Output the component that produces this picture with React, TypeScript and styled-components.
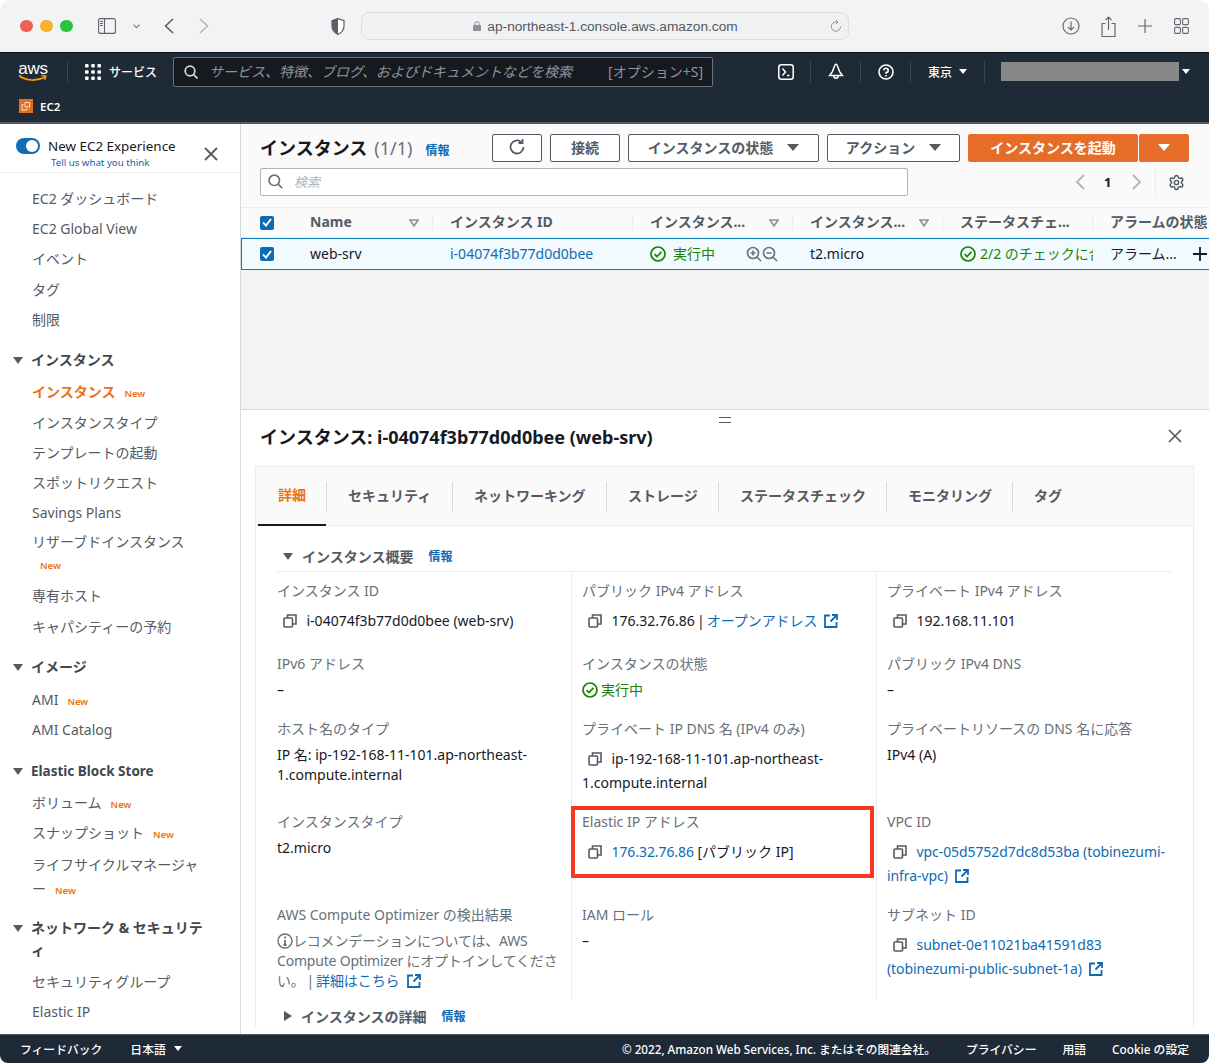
import React from 'react';
import styled, { createGlobalStyle } from 'styled-components';
import { Settings } from 'lucide-react';

const Global = createGlobalStyle`
  html, body { margin: 0; padding: 0; background: #fff; }
  body { font-family: "Noto Sans", "Noto Sans CJK JP", sans-serif; color: #16191f; }
  * { box-sizing: border-box; }
`;

const Window = styled.div`
  width: 1209px; height: 1063px; display: flex; flex-direction: column; overflow: hidden;
  border-radius: 10px 10px 8px 8px; background: #fff;
`;
/* Browser chrome */
const Chrome = styled.div`
  height: 53px; flex: none; background: #f2f3f5; display: flex; align-items: center; position: relative;
  border-bottom: 1px solid #0d1117;
`;
const Lights = styled.div`display: flex; gap: 7.5px; margin-left: 20px; width: 78px;`;
const Light = styled.span<{ $c: string }>`width: 12.5px; height: 12.5px; border-radius: 50%; background: ${p => p.$c};`;
const ChromeIcon = styled.svg<{ $ml: number }>`flex: none; margin-left: ${p => p.$ml}px; display: block;`;
const UrlBar = styled.div`
  width: 488px; height: 28px; margin-left: 16px; flex: none; border: 1px solid #dcdde0; border-radius: 8px; background: #f0f1f3;
  display: flex; align-items: center; justify-content: center; gap: 6px; position: relative;
  font-family: "Liberation Sans", sans-serif; font-size: 13.7px; color: #55585d; padding-left: 1px;
`;
const Reload = styled.svg`position: absolute; right: 5px; top: 6px;`;

/* AWS header */
const Header = styled.div`
  height: 71px; flex: none; background: #1f2a37; border-bottom: 2px solid #545b64; display: flex; flex-direction: column; color: #fff;
`;
const HeaderTop = styled.div`height: 37px; display: flex; align-items: center; flex: none;`;
const HeaderBottom = styled.div`height: 32px; display: flex; align-items: center; padding: 0 0 0 19px; gap: 7px; font-size: 11.5px; font-weight: 600;`;
const AwsLogo = styled.div`
  width: 30px; margin-left: 18px; height: 26px; position: relative; flex: none; display: flex; justify-content: center;
  font-family: "Liberation Sans", sans-serif; font-size: 17px; line-height: 19px; letter-spacing: -.3px;
`;
const Smile = styled.svg`position: absolute; left: 0; top: 15px;`;
const VSep = styled.span<{ $ml: number; $h?: number }>`width: 1px; height: ${p => p.$h ?? 22}px; background: #3d4753; margin-left: ${p => p.$ml}px; flex: none;`;
const Services = styled.div`display: flex; align-items: center; gap: 8px; margin-left: 17px; font-size: 12px; font-weight: 500; width: 88px; flex: none;`;
const GlobalSearch = styled.div`
  width: 540px; height: 30px; background: #16191f; border: 1px solid #687078; border-radius: 2px; flex: none; display: flex; align-items: center; padding: 0 9px 0 10px; gap: 11px;
  font-size: 14px; color: #8d9499;
`;
const GlobalPlaceholder = styled.span`flex: 1; font-style: italic; white-space: nowrap; padding-bottom: 2px;`;
const Shortcut = styled.span`font-size: 14px; white-space: nowrap; padding-bottom: 2px;`;
const NavIcon = styled.div<{ $w: number; $pl?: number }>`width: ${p => p.$w}px; padding-left: ${p => p.$pl ?? 0}px; flex: none; display: flex; justify-content: center; align-items: center; height: 22px; border-right: 1px solid #3d4753;`;
const Region = styled.div`width: 74px; flex: none; height: 22px; border-right: 1px solid #3d4753; display: flex; align-items: center; padding-left: 17px; gap: 7px; font-size: 12px; font-weight: 500;`;
const Masked = styled.div`width: 178px; height: 19px; background: #888; margin-left: 16px; flex: none;`;
const Caret = styled.span<{ $c?: string; $s?: number }>`
  display: inline-block; flex: none; width: 0; height: 0;
  border-left: ${p => p.$s ?? 4}px solid transparent; border-right: ${p => p.$s ?? 4}px solid transparent;
  border-top: ${p => (p.$s ?? 4) * 1.25}px solid ${p => p.$c ?? '#fff'};
`;
const UserCaret = styled(Caret)`margin-left: 3px;`;

/* Body */
const Body = styled.div`flex: 1; display: flex; min-height: 0;`;
const Sidebar = styled.nav`width: 241px; flex: none; border-right: 1px solid #d5dbdb; background: #fff; overflow: hidden; display: flex; flex-direction: column;`;
const Experience = styled.div`height: 49px; flex: none; border-bottom: 1px solid #eaeded; display: flex; padding: 14px 0 0 16px; position: relative; margin-bottom: 11px;`;
const Toggle = styled.span`width: 24px; height: 16px; border-radius: 8px; background: #0f6cb5; position: relative; flex: none; &::after { content: ''; position: absolute; right: 2px; top: 2px; width: 12px; height: 12px; border-radius: 50%; background: #fff; }`;
const ExpText = styled.div`margin-left: 8px; font-size: 13.4px; line-height: 17px; white-space: nowrap; color: #16191f;`;
const ExpLink = styled.div`font-size: 9.7px; line-height: 14px; color: #0f5eb8; margin: 1px 0 0 3px;`;
const CloseBtn = styled.svg`position: absolute; left: 204px; top: 23px;`;
const NavList = styled.div`display: flex; flex-direction: column;`;
const NavItem = styled.div<{ $active?: boolean }>`
  padding: 0 8px 0 32px; height: 30.2px; font-size: 14px; line-height: 30px; white-space: nowrap;
  color: ${p => (p.$active ? '#ec7211' : '#545b64')}; font-weight: ${p => (p.$active ? 700 : 400)};
`;
const NavWrap = styled.div<{ $mt: number; $mb: number }>`padding: 0 36px 0 32px; font-size: 14px; line-height: 24px; color: #545b64; margin: ${p => p.$mt}px 0 ${p => p.$mb}px;`;
const NavSection = styled.div<{ $fs?: number; $mb?: number }>`
  display: flex; align-items: flex-start; gap: 8px; padding: 0 30px 0 13px; margin: 14.5px 0 ${p => p.$mb ?? 4}px; font-size: ${p => p.$fs ?? 14}px; line-height: 22px; font-weight: 700; color: #414750; min-height: 24px;
`;
const SecCaret = styled.span`margin-top: 8px; flex: none; display: inline-block; width: 0; height: 0; border-left: 5px solid transparent; border-right: 5px solid transparent; border-top: 7px solid #545b64;`;
const New = styled.span<{ $block?: boolean }>`color: #ec7211; font-size: 9.5px; line-height: 1; font-weight: 600; margin-left: 9px; ${p => (p.$block ? 'display: block; margin: 3px 0 0 8px; line-height: 18px;' : '')}`;

const Main = styled.main`flex: 1; min-width: 0; display: flex; flex-direction: column; background: #f2f3f3; overflow: hidden;`;
const ListHead = styled.div`height: 84px; flex: none; background: #fafafa; padding: 10px 0 0 19px; border-bottom: 1px solid #eaeded; display: flex; flex-direction: column;`;
const TitleRow = styled.div`display: flex; align-items: center; height: 28px;`;
const H1 = styled.div`font-size: 18px; font-weight: 700; color: #16191f; white-space: nowrap; width: 232px; display: flex; align-items: baseline; padding-bottom: 3px;`;
const Count = styled.span`font-weight: 400; color: #687078; margin-left: 7px;`;
const Info = styled.span<{ $ml?: number }>`color: #0f6ab4; font-size: 12px; font-weight: 700; margin-left: ${p => p.$ml ?? 13}px; white-space: nowrap;`;
const Btn = styled.div<{ $w: number; $primary?: boolean; $ml?: number }>`
  width: ${p => p.$w}px; height: 28px; flex: none; border-radius: 2px; display: flex; align-items: center; justify-content: center; gap: 14px;
  margin-left: ${p => p.$ml ?? 8}px; font-size: 14px; font-weight: 700; white-space: nowrap; padding-bottom: 2px;
  background: ${p => (p.$primary ? '#e66d28' : '#fff')}; color: ${p => (p.$primary ? '#fff' : '#545b64')};
  border: 1px solid ${p => (p.$primary ? '#e66d28' : '#545b64')};
`;
const SearchRow = styled.div`display: flex; align-items: center; height: 28px; margin-top: 6px;`;
const SearchBox = styled.div`width: 648px; height: 28px; background: #fff; border: 1px solid #aab7b8; border-radius: 2px; display: flex; align-items: center; padding: 0 0 2px 7px; gap: 11px; font-size: 13px; font-style: italic; color: #aab7b8; flex: none;`;
const Pager = styled.div`margin-left: 167px; display: flex; align-items: center; height: 28px; font-size: 13px; font-weight: 700;`;
const PagerNum = styled.span`margin: 0 21px 0 19px;`;
const GearWrap = styled.div`margin-left: 13px; padding-left: 12px; height: 28px; border-left: 1px solid #eaeded; display: flex; align-items: center;`;

const THead = styled.div`grid-template-columns: 52px 140px 200px 160px 150px 150px 1fr; display: grid; height: 30px; flex: none; background: #fafafa; border-bottom: 1px solid #eaeded; align-items: center;`;
const TH = styled.div<{ $sep?: boolean }>`
  height: 16px; padding: 0 13px 0 17px; display: flex; align-items: center; justify-content: space-between; font-size: 14px; font-weight: 700; color: #545b64; white-space: nowrap;
  border-right: 1px solid ${p => (p.$sep === false ? 'transparent' : '#eaeded')};
`;
const THText = styled.span`padding-bottom: 3px;`;
const TRow = styled.div`grid-template-columns: 51px 140px 200px 160px 150px 150px 1fr; display: grid; height: 32px; flex: none; background: #f1faff; border: 1px solid #0f80b8; border-right: none; align-items: center; box-shadow: 0 1px 1px rgba(0,28,36,.3); font-size: 14px;`;
const TD = styled.div<{ $c?: string }>`padding-left: 17px; color: ${p => p.$c ?? '#16191f'}; display: flex; align-items: center; white-space: nowrap; overflow: hidden; height: 100%;`;
const TDText = styled.span`padding-bottom: 2px;`;
const Check = styled.span`width: 14px; height: 14px; margin-left: 2px; background: #0f6ab4; border-radius: 2px; display: flex; align-items: center; justify-content: center; flex: none;`;
const CheckCell = styled.div<{ $pl?: number }>`padding-left: ${p => p.$pl ?? 17}px; display: flex; align-items: center;`;
const Status = styled.span<{ $gap?: number }>`display: inline-flex; align-items: center; gap: ${p => p.$gap ?? 7}px; color: #1d8102;`;
const Magnifiers = styled.span`display: inline-flex; margin-left: auto; margin-right: 15px; gap: 0;`;
const Plus = styled.svg`margin-left: auto; margin-right: 2px;`;
const Gap = styled.div`height: 139px; flex: none; background: #f2f3f3;`;

const Panel = styled.section`flex: 1; min-height: 0; background: #fff; border-top: 1px solid #d5dbdb; position: relative; padding: 0 15px 0 14px; overflow: hidden;`;
const Handle = styled.div`position: absolute; left: 478px; top: 7px; width: 12px; height: 6px; border-top: 1.5px solid #545b64; border-bottom: 1.5px solid #545b64;`;
const PanelTitle = styled.div`height: 52px; margin-bottom: 4px; display: flex; align-items: center; padding: 0 12px 0 5px; font-size: 18px; font-weight: 700; justify-content: space-between;`;
const Card = styled.div`border: 1px solid #eaeded; border-bottom: none; box-shadow: 0 0 1px rgba(0,0,0,.05);`;
const Tabs = styled.div`height: 59px; display: flex; align-items: center; background: #fafafa; border-bottom: 1px solid #eaeded; padding-left: 2px;`;
const Tab = styled.div<{ $active?: boolean; $w: number }>`
  width: ${p => p.$w}px; flex: none; height: 100%; display: flex; align-items: center; padding: 0 0 3px ${p => (p.$active ? 20 : 22)}px; font-size: 14px; font-weight: 700; white-space: nowrap; position: relative;
  color: ${p => (p.$active ? '#ec7211' : '#545b64')};
  ${p => (p.$active
    ? 'border-bottom: 2px solid #16191f; margin-bottom: -1px;'
    : `&::before { content: ''; position: absolute; left: 0; top: 15px; height: 29px; width: 1px; background: #d5dbdb; }`)}
`;
const Content = styled.div`padding: 20px 21px 0 21px;`;
const SecHead = styled.div`height: 26px; display: flex; align-items: center; gap: 9px; font-size: 14px; font-weight: 700; color: #545b64; border-bottom: 1px solid #eaeded; padding-bottom: 5px;`;
const TriDown = styled.span`width: 0; height: 0; border-left: 5px solid transparent; border-right: 5px solid transparent; border-top: 7px solid #545b64; flex: none; margin-left: 6px;`;
const TriRight = styled.span`width: 0; height: 0; border-top: 5px solid transparent; border-bottom: 5px solid transparent; border-left: 8px solid #545b64; flex: none; margin-left: 7px;`;
const Grid = styled.div`display: grid; grid-template-columns: 294px 305px 1fr; grid-template-rows: 73px 65px 93px 93px 104px;`;
const Cell = styled.div<{ $first?: boolean; $boxed?: boolean }>`
  padding: 9px 0 0 ${p => (p.$first ? 0 : 10)}px; border-left: ${p => (p.$first ? 'none' : '1px solid #eaeded')}; position: relative; min-width: 0;
  ${p => (p.$boxed ? `&::after { content: ''; box-sizing: border-box; position: absolute; left: -1px; top: 3px; width: 303px; height: 72px; border: 4px solid #f93822; pointer-events: none; }` : '')}
`;
const Label = styled.div`font-size: 14px; line-height: 20px; color: #687078; white-space: nowrap;`;
const Value = styled.div`font-size: 14px; line-height: 24px; color: #16191f; margin-top: 8px;`;
const Plain = styled.div`font-size: 14px; line-height: 20px; color: #16191f; margin-top: 6px;`;
const Body14 = styled.div`font-size: 14px; line-height: 20px; color: #687078; margin-top: 6px; letter-spacing: -.2px;`;
const Copy = styled.svg`display: inline-block; vertical-align: -2px; margin: 0 9.5px 0 6px;`;
const A = styled.a`color: #0f6ab4; text-decoration: none; letter-spacing: -.08px;`;
const Tight = styled.span`word-spacing: -1.5px;`;
const Ext = styled.svg`display: inline-block; vertical-align: -2px; margin-left: 7px;`;
const InfoIcon = styled.svg`display: inline-block; vertical-align: -3px;`;
const Running = styled.div`display: flex; align-items: center; gap: 3px; color: #1d8102; font-size: 14px; line-height: 20px; margin-top: 6px;`;
const Foot2 = styled.div`display: flex; align-items: center; height: 20px; gap: 9px; font-size: 14px; font-weight: 700; color: #545b64; margin-top: 6px;`;

const Footer = styled.footer`height: 29px; flex: none; background: #1f2a37; border-top: 1px solid #545b64; color: #fff; display: flex; align-items: center; font-size: 11.8px; font-weight: 500; padding: 0 20px 2px;`;
const FootLeft = styled.div`display: flex; align-items: center; gap: 28px; flex: 1;`;
const FootLang = styled.span`display: flex; align-items: center; gap: 8px;`;
const FootRight = styled.div`display: flex; gap: 26px; white-space: nowrap;`;
const Copyright = styled.span`font-size: 11.7px; margin-right: 4px;`;

const CopyIcon = () => (
  <Copy width="14" height="14" viewBox="0 0 14 14" fill="none" stroke="#545b64" strokeWidth="1.6">
    <rect x="1" y="4" width="8.5" height="9" rx="1" />
    <path d="M4.5 4V1h8.5v9h-3.5" />
  </Copy>
);
const ExtIcon = () => (
  <Ext width="14" height="14" viewBox="0 0 14 14" fill="none" stroke="#0f6ab4" strokeWidth="1.8">
    <path d="M6 1.5H1V13h11.5V8" />
    <path d="M8 1h5v5M13 1 6.5 7.5" />
  </Ext>
);
const OkIcon = () => (
  <svg width="16" height="16" viewBox="0 0 16 16" fill="none" stroke="#1d8102" strokeWidth="1.7">
    <circle cx="8" cy="8" r="7" />
    <path d="M4.6 8.2 7 10.5l4.4-4.6" />
  </svg>
);
const FilterTri = () => (
  <svg width="10" height="8" viewBox="0 0 10 8" fill="none" stroke="#879596" strokeWidth="1.6">
    <path d="M1 1h8L5 7z" />
  </svg>
);
const CheckBox = () => (
  <Check>
    <svg width="10" height="9" viewBox="0 0 10 9" fill="none" stroke="#fff" strokeWidth="2"><path d="M1 4.5 4 7.5 9 1" /></svg>
  </Check>
);
const Zoom = ({ plus }: { plus?: boolean }) => (
  <svg width="16" height="16" viewBox="0 0 16 16" fill="none" stroke="#687078" strokeWidth="1.6">
    <circle cx="7" cy="7" r="5.5" />
    <path d="M11 11l4 4M4.5 7h5" />
    {plus && <path d="M7 4.5v5" />}
  </svg>
);

const App = () => (
  <Window>
    <Global />
    <Chrome>
      <Lights>
        <Light $c="#ee5f57" /><Light $c="#f5b12f" /><Light $c="#2ac33f" />
      </Lights>
      <ChromeIcon $ml={0} width="18" height="16" viewBox="0 0 18 16" fill="none" stroke="#606468" strokeWidth="1.1">
        <rect x=".6" y=".6" width="16.8" height="14.8" rx="2" />
        <path d="M6.5.6v14.8M2 3.5h3M2 5.5h3M2 7.5h3" />
      </ChromeIcon>
      <ChromeIcon $ml={17} width="7" height="5" viewBox="0 0 7 5" fill="none" stroke="#7b7e82" strokeWidth="1.2"><path d="M.5.7 3.5 3.7 6.5.7" /></ChromeIcon>
      <ChromeIcon $ml={24} width="10" height="16" viewBox="0 0 10 16" fill="none" stroke="#54575b" strokeWidth="1.5"><path d="M9 1 1.5 8 9 15" /></ChromeIcon>
      <ChromeIcon $ml={25} width="10" height="16" viewBox="0 0 10 16" fill="none" stroke="#b3b5b8" strokeWidth="1.5"><path d="M1 1 8.5 8 1 15" /></ChromeIcon>
      <ChromeIcon $ml={122} width="14" height="17" viewBox="0 0 14 17">
        <path d="M7 .6 13 2.6V8c0 4-2.5 6.8-6 8.4C3.5 14.8 1 12 1 8V2.6z" fill="#fff" stroke="#5c6064" strokeWidth="1.2" />
        <path d="M7 .6 1 2.6V8c0 4 2.5 6.8 6 8.4z" fill="#5c6064" />
      </ChromeIcon>
      <UrlBar>
        <svg width="8" height="10" viewBox="0 0 8 10" fill="none"><rect y="4" width="8" height="6" rx="1" fill="#8c8f93" /><path d="M1.8 4.5V2.8a2.2 2.2 0 0 1 4.4 0v1.7" stroke="#8c8f93" strokeWidth="1" /></svg>
        ap-northeast-1.console.aws.amazon.com
        <Reload width="14" height="14" viewBox="0 0 14 14" fill="none" stroke="#8c8f93" strokeWidth="1"><path d="M11.5 7.5A4.6 4.6 0 1 1 7 3h1.5M7 1l2 2-2 2" /></Reload>
      </UrlBar>
      <ChromeIcon $ml={213} width="18" height="18" viewBox="0 0 18 18" fill="none" stroke="#66696d" strokeWidth="1.2">
        <circle cx="9" cy="9" r="8" /><path d="M9 4.5v8.5M5.8 9.8 9 13l3.2-3.2" />
      </ChromeIcon>
      <ChromeIcon $ml={21} width="15" height="21" viewBox="0 0 15 21" fill="none" stroke="#66696d" strokeWidth="1.2">
        <path d="M4.5 7.5H1v13h13v-13h-3.5M7.5 14V1M4.5 4l3-3 3 3" />
      </ChromeIcon>
      <ChromeIcon $ml={22} width="14" height="14" viewBox="0 0 14 14" fill="none" stroke="#66696d" strokeWidth="1.2"><path d="M7 0v14M0 7h14" /></ChromeIcon>
      <ChromeIcon $ml={22} width="15" height="16" viewBox="0 0 15 16" fill="none" stroke="#66696d" strokeWidth="1.1">
        <rect x=".6" y=".6" width="5.8" height="6" rx="1.2" /><rect x="8.6" y=".6" width="5.8" height="6" rx="1.2" />
        <rect x=".6" y="9.4" width="5.8" height="6" rx="1.2" /><rect x="8.6" y="9.4" width="5.8" height="6" rx="1.2" />
      </ChromeIcon>
    </Chrome>

    <Header>
      <HeaderTop>
        <AwsLogo>
          aws
          <Smile width="30" height="9" viewBox="0 0 30 9" fill="none">
            <path d="M1 1.5C8 7 19 7.5 27 3" stroke="#ff9900" strokeWidth="1.7" />
            <path d="M23.5 1.5 28 2l-1.3 4" stroke="#ff9900" strokeWidth="1.4" />
          </Smile>
        </AwsLogo>
        <VSep $ml={19} />
        <Services>
          <svg width="16" height="16" viewBox="0 0 16 16" fill="#fff">
            {[1.8, 8, 14.2].flatMap(y => [1.8, 8, 14.2].map(x => <rect key={`${x}-${y}`} x={x - 1.8} y={y - 1.8} width="3.6" height="3.6" rx="1" />))}
          </svg>
          サービス
        </Services>
        <GlobalSearch>
          <svg width="14" height="14" viewBox="0 0 14 14" fill="none" stroke="#d5dbdb" strokeWidth="1.7"><circle cx="6" cy="6" r="4.8" /><path d="m9.5 9.5 4 4" /></svg>
          <GlobalPlaceholder>サービス、特徴、ブログ、およびドキュメントなどを検索</GlobalPlaceholder>
          <Shortcut>[オプション+S]</Shortcut>
        </GlobalSearch>
        <NavIcon $w={98} $pl={48}>
          <svg width="16" height="16" viewBox="0 0 16 16" fill="none" stroke="#fff" strokeWidth="1.5"><rect x=".8" y=".8" width="14.4" height="14.4" rx="2.5" /><path d="M4.5 4.5 7.5 8l-3 3.5M9 11.5h2.5" /></svg>
        </NavIcon>
        <NavIcon $w={50}>
          <svg width="16" height="17" viewBox="0 0 16 17" fill="none" stroke="#fff" strokeWidth="1.5"><path d="M8 1.2c-.7 0-1.1.5-1.2 1.2L4.4 8.6 1.6 12.6h12.8l-2.8-4L9.2 2.4C9.1 1.7 8.7 1.2 8 1.2z" /><path d="M5.8 13a2.2 2.2 0 0 0 4.4 0" /></svg>
        </NavIcon>
        <NavIcon $w={50}>
          <svg width="16" height="16" viewBox="0 0 16 16" fill="none" stroke="#fff" strokeWidth="1.6"><circle cx="8" cy="8" r="7" /><path d="M5.8 6.2A2.2 2.2 0 1 1 8 8.6v1.2M8 11v1.6" /></svg>
        </NavIcon>
        <Region>東京 <Caret /></Region>
        <Masked />
        <UserCaret />
      </HeaderTop>
      <HeaderBottom>
        <svg width="14" height="14" viewBox="0 0 14 14"><rect width="14" height="14" fill="#e0701f" /><path d="M6 3.5h4.5V8H6zM4.5 5.5H3V11h5V9.5" fill="none" stroke="#fff" strokeWidth=".8" /></svg>
        EC2
      </HeaderBottom>
    </Header>

    <Body>
      <Sidebar>
        <Experience>
          <Toggle />
          <ExpText>
            New EC2 Experience
            <ExpLink>Tell us what you think</ExpLink>
          </ExpText>
          <CloseBtn width="14" height="14" viewBox="0 0 14 14" fill="none" stroke="#545b64" strokeWidth="1.8"><path d="m1 1 12 12M13 1 1 13" /></CloseBtn>
        </Experience>
        <NavList>
          <NavItem>EC2 ダッシュボード</NavItem>
          <NavItem>EC2 Global View</NavItem>
          <NavItem>イベント</NavItem>
          <NavItem>タグ</NavItem>
          <NavItem>制限</NavItem>
          <NavSection><SecCaret />インスタンス</NavSection>
          <NavItem $active>インスタンス<New>New</New></NavItem>
          <NavItem>インスタンスタイプ</NavItem>
          <NavItem>テンプレートの起動</NavItem>
          <NavItem>スポットリクエスト</NavItem>
          <NavItem>Savings Plans</NavItem>
          <NavWrap $mt={2} $mb={6}>リザーブドインスタンス<New $block>New</New></NavWrap>
          <NavItem>専有ホスト</NavItem>
          <NavItem>キャパシティーの予約</NavItem>
          <NavSection $mb={5}><SecCaret />イメージ</NavSection>
          <NavItem>AMI<New>New</New></NavItem>
          <NavItem>AMI Catalog</NavItem>
          <NavSection $fs={13.5}><SecCaret />Elastic Block Store</NavSection>
          <NavItem>ボリューム<New>New</New></NavItem>
          <NavItem>スナップショット<New>New</New></NavItem>
          <NavWrap $mt={4} $mb={2}>ライフサイクルマネージャー<New>New</New></NavWrap>
          <NavSection $mb={6}><SecCaret />ネットワーク &amp; セキュリティ</NavSection>
          <NavItem>セキュリティグループ</NavItem>
          <NavItem>Elastic IP</NavItem>
        </NavList>
      </Sidebar>

      <Main>
        <ListHead>
          <TitleRow>
            <H1>インスタンス<Count>(1/1)</Count><Info>情報</Info></H1>
            <Btn $w={50} $ml={0}>
              <svg width="18" height="18" viewBox="0 0 18 18" fill="none" stroke="#545b64" strokeWidth="1.8"><path d="M15.5 9a6.5 6.5 0 1 1-2.2-4.9" /><path d="M14.5 1v4h-4" /></svg>
            </Btn>
            <Btn $w={70}>接続</Btn>
            <Btn $w={191}>インスタンスの状態<Caret $c="#545b64" $s={6} /></Btn>
            <Btn $w={133}>アクション<Caret $c="#545b64" $s={6} /></Btn>
            <Btn $w={170} $primary>インスタンスを起動</Btn>
            <Btn $w={50} $primary $ml={1}><Caret $s={6} /></Btn>
          </TitleRow>
          <SearchRow>
            <SearchBox>
              <svg width="15" height="15" viewBox="0 0 15 15" fill="none" stroke="#687078" strokeWidth="1.7"><circle cx="6.3" cy="6.3" r="5.2" /><path d="m10 10 4.2 4.2" /></svg>
              検索
            </SearchBox>
            <Pager>
              <svg width="10" height="16" viewBox="0 0 10 16" fill="none" stroke="#aab7b8" strokeWidth="1.8"><path d="M9 1 2 8l7 7" /></svg>
              <PagerNum>1</PagerNum>
              <svg width="10" height="16" viewBox="0 0 10 16" fill="none" stroke="#aab7b8" strokeWidth="1.8"><path d="m1 1 7 7-7 7" /></svg>
              <GearWrap>
                <Settings size={17} color="#545b64" strokeWidth={2.1} />
              </GearWrap>
            </Pager>
          </SearchRow>
        </ListHead>
        <THead>
          <CheckCell><CheckBox /></CheckCell>
          <TH><THText>Name</THText><FilterTri /></TH>
          <TH><THText>インスタンス ID</THText></TH>
          <TH><THText>インスタンス...</THText><FilterTri /></TH>
          <TH><THText>インスタンス...</THText><FilterTri /></TH>
          <TH><THText>ステータスチェ...</THText></TH>
          <TH $sep={false}><THText>アラームの状態</THText></TH>
        </THead>
        <TRow>
          <CheckCell $pl={16}><CheckBox /></CheckCell>
          <TD><TDText>web-srv</TDText></TD>
          <TD $c="#0f6ab4"><TDText>i-04074f3b77d0d0bee</TDText></TD>
          <TD><Status><OkIcon /><TDText>実行中</TDText></Status><Magnifiers><Zoom plus /><Zoom /></Magnifiers></TD>
          <TD><TDText>t2.micro</TDText></TD>
          <TD><Status $gap={4}><OkIcon /><TDText>2/2 のチェックに合格しました</TDText></Status></TD>
          <TD><TDText>アラーム...</TDText><Plus width="14" height="14" viewBox="0 0 14 14" fill="none" stroke="#16191f" strokeWidth="1.8"><path d="M7 0v14M0 7h14" /></Plus></TD>
        </TRow>
        <Gap />
        <Panel>
          <Handle />
          <PanelTitle>
            インスタンス: i-04074f3b77d0d0bee (web-srv)
            <svg width="14" height="14" viewBox="0 0 14 14" fill="none" stroke="#545b64" strokeWidth="1.7"><path d="m1 1 12 12M13 1 1 13" /></svg>
          </PanelTitle>
          <Card>
            <Tabs>
              <Tab $active $w={68}>詳細</Tab>
              <Tab $w={126}>セキュリティ</Tab>
              <Tab $w={154}>ネットワーキング</Tab>
              <Tab $w={112}>ストレージ</Tab>
              <Tab $w={168}>ステータスチェック</Tab>
              <Tab $w={126}>モニタリング</Tab>
              <Tab $w={70}>タグ</Tab>
            </Tabs>
            <Content>
              <SecHead><TriDown />インスタンス概要<Info $ml={6}>情報</Info></SecHead>
              <Grid>
                <Cell $first>
                  <Label>インスタンス ID</Label>
                  <Value><CopyIcon />i-04074f3b77d0d0bee (web-srv)</Value>
                </Cell>
                <Cell>
                  <Label>パブリック IPv4 アドレス</Label>
                  <Value><CopyIcon /><Tight>176.32.76.86 | </Tight><A>オープンアドレス</A><ExtIcon /></Value>
                </Cell>
                <Cell>
                  <Label>プライベート IPv4 アドレス</Label>
                  <Value><CopyIcon />192.168.11.101</Value>
                </Cell>

                <Cell $first><Label>IPv6 アドレス</Label><Plain>–</Plain></Cell>
                <Cell>
                  <Label>インスタンスの状態</Label>
                  <Running><OkIcon />実行中</Running>
                </Cell>
                <Cell><Label>パブリック IPv4 DNS</Label><Plain>–</Plain></Cell>

                <Cell $first><Label>ホスト名のタイプ</Label><Plain>IP 名: ip-192-168-11-101.ap-northeast-1.compute.internal</Plain></Cell>
                <Cell>
                  <Label>プライベート IP DNS 名 (IPv4 のみ)</Label>
                  <Value><CopyIcon />ip-192-168-11-101.ap-northeast-1.compute.internal</Value>
                </Cell>
                <Cell><Label>プライベートリソースの DNS 名に応答</Label><Plain>IPv4 (A)</Plain></Cell>

                <Cell $first><Label>インスタンスタイプ</Label><Plain>t2.micro</Plain></Cell>
                <Cell $boxed>
                  <Label>Elastic IP アドレス</Label>
                  <Value><CopyIcon /><A>176.32.76.86</A> [パブリック IP]</Value>
                </Cell>
                <Cell>
                  <Label>VPC ID</Label>
                  <Value><CopyIcon /><A>vpc-05d5752d7dc8d53ba (tobinezumi-infra-vpc)</A><ExtIcon /></Value>
                </Cell>

                <Cell $first>
                  <Label>AWS Compute Optimizer の検出結果</Label>
                  <Body14>
                    <InfoIcon width="16" height="16" viewBox="0 0 16 16" fill="none" stroke="#687078" strokeWidth="1.4"><circle cx="8" cy="8" r="7" /><path d="M8 7v5M6.4 12h3.2M8 3.6v1.8" strokeWidth="1.8" /></InfoIcon>
                    レコメンデーションについては、AWS Compute Optimizer にオプトインしてください<Tight>。 | </Tight><A>詳細はこちら</A><ExtIcon />
                  </Body14>
                </Cell>
                <Cell><Label>IAM ロール</Label><Plain>–</Plain></Cell>
                <Cell>
                  <Label>サブネット ID</Label>
                  <Value><CopyIcon /><A>subnet-0e11021ba41591d83 (tobinezumi-public-subnet-1a)</A><ExtIcon /></Value>
                </Cell>
              </Grid>
              <Foot2><TriRight />インスタンスの詳細<Info $ml={6}>情報</Info></Foot2>
            </Content>
          </Card>
        </Panel>
      </Main>
    </Body>

    <Footer>
      <FootLeft>
        <span>フィードバック</span>
        <FootLang>日本語 <Caret /></FootLang>
      </FootLeft>
      <FootRight>
        <Copyright>© 2022, Amazon Web Services, Inc. またはその関連会社。</Copyright>
        <span>プライバシー</span>
        <span>用語</span>
        <span>Cookie の設定</span>
      </FootRight>
    </Footer>
  </Window>
);

export default App;
